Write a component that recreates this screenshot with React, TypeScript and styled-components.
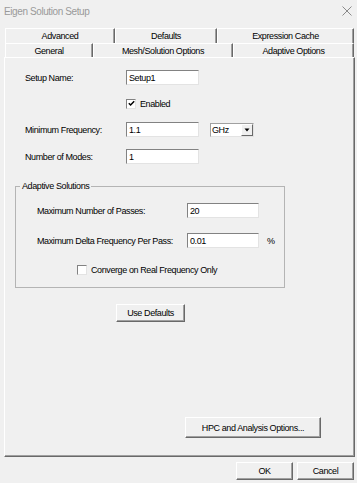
import React from 'react'
import styled, { createGlobalStyle } from 'styled-components'

const GlobalStyle = createGlobalStyle`
  html, body {
    margin: 0;
    padding: 0;
    background: #f0f0f0;
  }
  body {
    font-family: "Liberation Sans", Arial, sans-serif;
    font-size: 9px;
    letter-spacing: -0.4px;
    color: #000;
  }
`

const Window = styled.div`
  width: 357px;
  height: 483px;
  overflow: hidden;
  display: flex;
  flex-direction: column;
  background: #f0f0f0;
`

const TitleBar = styled.div`
  height: 22px;
  display: flex;
  align-items: center;
  justify-content: space-between;
  padding: 0 5px 0 4px;
`

const Title = styled.span`
  font-size: 10px;
  color: #9a9a9a;
`

const TabStrip = styled.div`
  margin: 6px 0 0 5px;
  width: 349px;
`

const TabRow = styled.div<{ $h: number }>`
  display: flex;
  height: ${(p) => p.$h}px;
`

const Tab = styled.div<{ $w: number }>`
  box-sizing: border-box;
  width: ${(p) => p.$w}px;
  display: flex;
  align-items: center;
  justify-content: center;
  border-top: 1px solid #fff;
  border-left: 1px solid #fff;
  border-right: 1px solid #696969;
  box-shadow: inset -1px 0 #a0a0a0;
`

const Panel = styled.div`
  box-sizing: border-box;
  margin-left: 4px;
  width: 351px;
  height: 400px;
  border-top: 1px solid #fff;
  border-left: 1px solid #fff;
  border-right: 1px solid #696969;
  border-bottom: 1px solid #696969;
  box-shadow: inset -1px -1px #a0a0a0;
  padding-left: 10px;
  display: flex;
  flex-direction: column;
  align-items: flex-start;
`

const FormRow = styled.div<{ $top: number; $left?: number; $h?: number }>`
  display: flex;
  align-items: center;
  height: ${(p) => p.$h ?? 15}px;
  margin-top: ${(p) => p.$top}px;
  padding-left: ${(p) => p.$left ?? 0}px;
`

const Label = styled.span<{ $w: number }>`
  width: ${(p) => p.$w}px;
  white-space: nowrap;
`

const TextBox = styled.div<{ $w?: number }>`
  box-sizing: border-box;
  width: ${(p) => p.$w ?? 73}px;
  height: 15px;
  background: #fff;
  border-top: 1px solid #828282;
  border-left: 1px solid #828282;
  border-right: 1px solid #e3e3e3;
  border-bottom: 1px solid #e3e3e3;
  padding-left: 2px;
  display: flex;
  align-items: center;
`

const Select = styled.div`
  box-sizing: border-box;
  margin-left: 11px;
  width: 44px;
  height: 14px;
  background: #fff;
  border-top: 1px solid #a0a0a0;
  border-left: 1px solid #a0a0a0;
  border-right: 1px solid #e3e3e3;
  border-bottom: 1px solid #e3e3e3;
  display: flex;
  align-items: stretch;
`

const SelectValue = styled.span`
  flex: 1;
  padding-left: 1px;
  display: flex;
  align-items: center;
`

const DropButton = styled.span`
  box-sizing: border-box;
  width: 12px;
  background: #f0f0f0;
  border-top: 1px solid #fff;
  border-left: 1px solid #fff;
  border-right: 1px solid #696969;
  border-bottom: 1px solid #696969;
  display: flex;
  align-items: center;
  justify-content: center;
`

const Check = styled.span`
  box-sizing: border-box;
  width: 10px;
  height: 10px;
  background: #fff;
  border-top: 1px solid #828282;
  border-left: 1px solid #828282;
  border-right: 1px solid #e3e3e3;
  border-bottom: 1px solid #e3e3e3;
  margin-right: 4px;
  display: flex;
  align-items: center;
  justify-content: center;
`

const Group = styled.fieldset`
  box-sizing: border-box;
  margin: 17px 0 0 0;
  width: 270px;
  min-width: 0;
  padding: 0 0 11px 21px;
  border: 1px solid #b4b4b4;
  display: flex;
  flex-direction: column;
  align-items: flex-start;
`

const Legend = styled.legend`
  margin-left: -17px;
  padding: 0 2px;
  line-height: 11px;
`

const Unit = styled.span`
  margin-left: 8px;
`

const Button = styled.button<{ $w: number; $h?: number; $top?: number; $left?: number }>`
  box-sizing: border-box;
  width: ${(p) => p.$w}px;
  height: ${(p) => p.$h ?? 18}px;
  margin-top: ${(p) => p.$top ?? 0}px;
  margin-left: ${(p) => p.$left ?? 0}px;
  padding: 0;
  font: inherit;
  letter-spacing: inherit;
  color: #000;
  background: #f0f0f0;
  border-top: 1px solid #fff;
  border-left: 1px solid #fff;
  border-right: 1px solid #696969;
  border-bottom: 1px solid #696969;
  box-shadow: inset -1px -1px #a0a0a0;
`

const Footer = styled.div`
  display: flex;
  justify-content: flex-end;
  gap: 4px;
  margin-top: 5px;
  padding-right: 3px;
`

const App = () => {
  return (
    <Window>
      <GlobalStyle />
      <TitleBar>
        <Title>Eigen Solution Setup</Title>
        <svg width="10" height="10" viewBox="0 0 10 10">
          <path d="M0.5 0.5 L9.5 9.5 M9.5 0.5 L0.5 9.5" stroke="#8a8a8a" strokeWidth="1" />
        </svg>
      </TitleBar>

      <TabStrip>
        <TabRow $h={15}>
          <Tab $w={110}>Advanced</Tab>
          <Tab $w={102}>Defaults</Tab>
          <Tab $w={137}>Expression Cache</Tab>
        </TabRow>
        <TabRow $h={14}>
          <Tab $w={88}>General</Tab>
          <Tab $w={140}>Mesh/Solution Options</Tab>
          <Tab $w={121}>Adaptive Options</Tab>
        </TabRow>
      </TabStrip>

      <Panel>
        <FormRow $top={12} $left={10}>
          <Label $w={101}>Setup Name:</Label>
          <TextBox>Setup1</TextBox>
        </FormRow>
        <FormRow $top={11} $left={111}>
          <Check>
            <svg width="7" height="7" viewBox="0 0 7 7">
              <path d="M0.8 3.2 L2.6 5 L6.2 1.2" stroke="#000" strokeWidth="1.5" fill="none" />
            </svg>
          </Check>
          <span>Enabled</span>
        </FormRow>
        <FormRow $top={11} $left={10}>
          <Label $w={101}>Minimum Frequency:</Label>
          <TextBox>1.1</TextBox>
          <Select>
            <SelectValue>GHz</SelectValue>
            <DropButton>
              <svg width="6" height="4" viewBox="0 0 6 4">
                <path d="M0.5 0.5 L5.5 0.5 L3 3.5 Z" fill="#000" />
              </svg>
            </DropButton>
          </Select>
        </FormRow>
        <FormRow $top={12} $left={10}>
          <Label $w={101}>Number of Modes:</Label>
          <TextBox>1</TextBox>
        </FormRow>

        <Group>
          <Legend>Adaptive Solutions</Legend>
          <FormRow $top={11}>
            <Label $w={150}>Maximum Number of Passes:</Label>
            <TextBox $w={72}>20</TextBox>
          </FormRow>
          <FormRow $top={15}>
            <Label $w={150}>Maximum Delta Frequency Per Pass:</Label>
            <TextBox $w={72}>0.01</TextBox>
            <Unit>%</Unit>
          </FormRow>
          <FormRow $top={15} $left={40} $h={13}>
            <Check />
            <span>Converge on Real Frequency Only</span>
          </FormRow>
        </Group>

        <Button $w={69} $top={16} $left={101}>Use Defaults</Button>
        <Button $w={136} $h={21} $top={95} $left={170}>HPC and Analysis Options...</Button>
      </Panel>

      <Footer>
        <Button $w={57}>OK</Button>
        <Button $w={57}>Cancel</Button>
      </Footer>
    </Window>
  )
}

export default App
